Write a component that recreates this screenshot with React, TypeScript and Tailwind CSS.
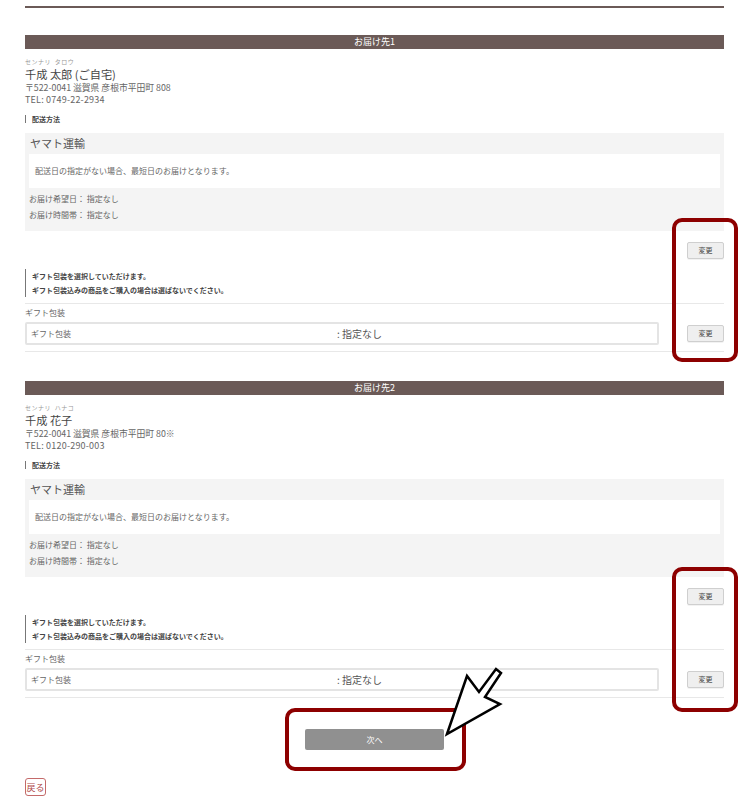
import React from "react";

interface Destination {
  no: number;
  kana: string;
  name: string;
  address: string;
  tel: string;
}

const destinations: Destination[] = [
  { no: 1, kana: "センナリ タロウ", name: "千成 太郎 (ご自宅)", address: "〒522-0041 滋賀県 彦根市平田町 808", tel: "TEL: 0749-22-2934" },
  { no: 2, kana: "センナリ ハナコ", name: "千成 花子", address: "〒522-0041 滋賀県 彦根市平田町 80※", tel: "TEL: 0120-290-003" },
];

function ChangeButton() {
  return (
    <button className="w-[37px] h-[17px] bg-[#efefef] border border-[#cfcfcf] rounded-[2px] text-[7px] leading-none text-[#444] shadow-[0_1px_0_rgba(0,0,0,0.05)]">
      変更
    </button>
  );
}

function DestinationBlock({ d }: { d: Destination }) {
  return (
    <section>
      <div className="h-[14px] bg-[#6b5a57] text-white text-[9px] leading-[14px] text-center">お届け先{d.no}</div>

      <div className="mt-[8px] text-[#666]">
        <p className="text-[6px] leading-[10px] tracking-[0.5px] text-[#999] whitespace-pre">{d.kana.replace(" ", "  ")}</p>
        <p className="text-[11.2px] leading-[14px] text-[#444]">{d.name}</p>
        <p className="mt-[1px] text-[8.8px] leading-[12px]">{d.address}</p>
        <p className="text-[9px] leading-[12px] tracking-[0.2px]">{d.tel}</p>
      </div>

      <h3 className="mt-[8px] h-[10px] flex items-center">
        <span className="border-l border-[#777] pl-[6px] text-[7px] leading-[8px] font-bold text-[#444]">配送方法</span>
      </h3>

      <div className="mt-[9px] h-[98px] bg-[#f4f4f4] pt-[3px] px-[4px] text-[#666]">
        <p className="pl-[1px] text-[11px] leading-[14px] text-[#555]">ヤマト運輸</p>
        <div className="mt-[4px] h-[34px] bg-white flex items-center pl-[6px] text-[8px]">
          配送日の指定がない場合、最短日のお届けとなります。
        </div>
        <p className="mt-[3px] text-[8px] leading-[16px]">お届け希望日： 指定なし</p>
        <p className="text-[8px] leading-[16px]">お届け時間帯： 指定なし</p>
      </div>

      <div className="mt-[11px] flex justify-end">
        <ChangeButton />
      </div>

      <div className="mt-[10px] border-l border-[#777] pl-[6px] text-[7px] leading-[14px] font-bold text-[#444]">
        <p>ギフト包装を選択していただけます。</p>
        <p>ギフト包装込みの商品をご購入の場合は選ばないでください。</p>
      </div>

      <div className="mt-[6px] border-t border-b border-[#e8e8e8] pt-[3px] pb-[6px]">
        <p className="text-[8px] leading-[12px] text-[#666]">ギフト包装</p>
        <div className="mt-[3px] flex items-center justify-between">
          <div className="w-[634px] h-[23px] border-2 border-[#e4e4e4] rounded-[2px] flex items-center pl-[4px] text-[#666]">
            <span className="w-[306px] text-[8px]">ギフト包装</span>
            <span className="text-[10px] text-[#555]">: 指定なし</span>
          </div>
          <ChangeButton />
        </div>
      </div>
    </section>
  );
}

export default function App() {
  return (
    <div
      className="relative w-[750px] h-[800px] bg-white overflow-hidden"
      style={{ fontFamily: '"Noto Sans CJK JP", "Noto Sans", sans-serif' }}
    >
      <div className="ml-[25px] w-[699px] pt-[6px]">
        <div className="h-[1.5px] bg-[#6b5a57]" />

        <div className="mt-[27.5px] flex flex-col gap-[29px]">
          {destinations.map((d) => (
            <DestinationBlock key={d.no} d={d} />
          ))}
        </div>

        <div className="mt-[31px] flex justify-center">
          <button className="w-[139px] h-[21px] bg-[#909090] rounded-[2px] text-white text-[8px]">次へ</button>
        </div>

        <button className="mt-[28px] w-[21px] h-[18px] border border-[#c46a6a] rounded-[3px] text-[9px] leading-none text-[#b04848] bg-white">
          戻る
        </button>
      </div>

      {/* annotation frames */}
      <div className="absolute left-[672px] top-[218px] w-[66px] h-[144px] border-4 border-[#8d0000] rounded-[10px]" />
      <div className="absolute left-[672px] top-[567px] w-[66px] h-[145px] border-4 border-[#8d0000] rounded-[10px]" />
      <div className="absolute left-[285px] top-[708px] w-[181px] h-[63px] border-4 border-[#8d0000] rounded-[10px]" />

      <svg className="absolute left-0 top-0" width="750" height="800" viewBox="0 0 750 800">
        <polygon
          points="447,734 467,676 479,692 496,669 501,673 485,697 500,704"
          fill="white"
          stroke="black"
          strokeWidth="2.5"
          strokeLinejoin="miter"
        />
      </svg>
    </div>
  );
}
